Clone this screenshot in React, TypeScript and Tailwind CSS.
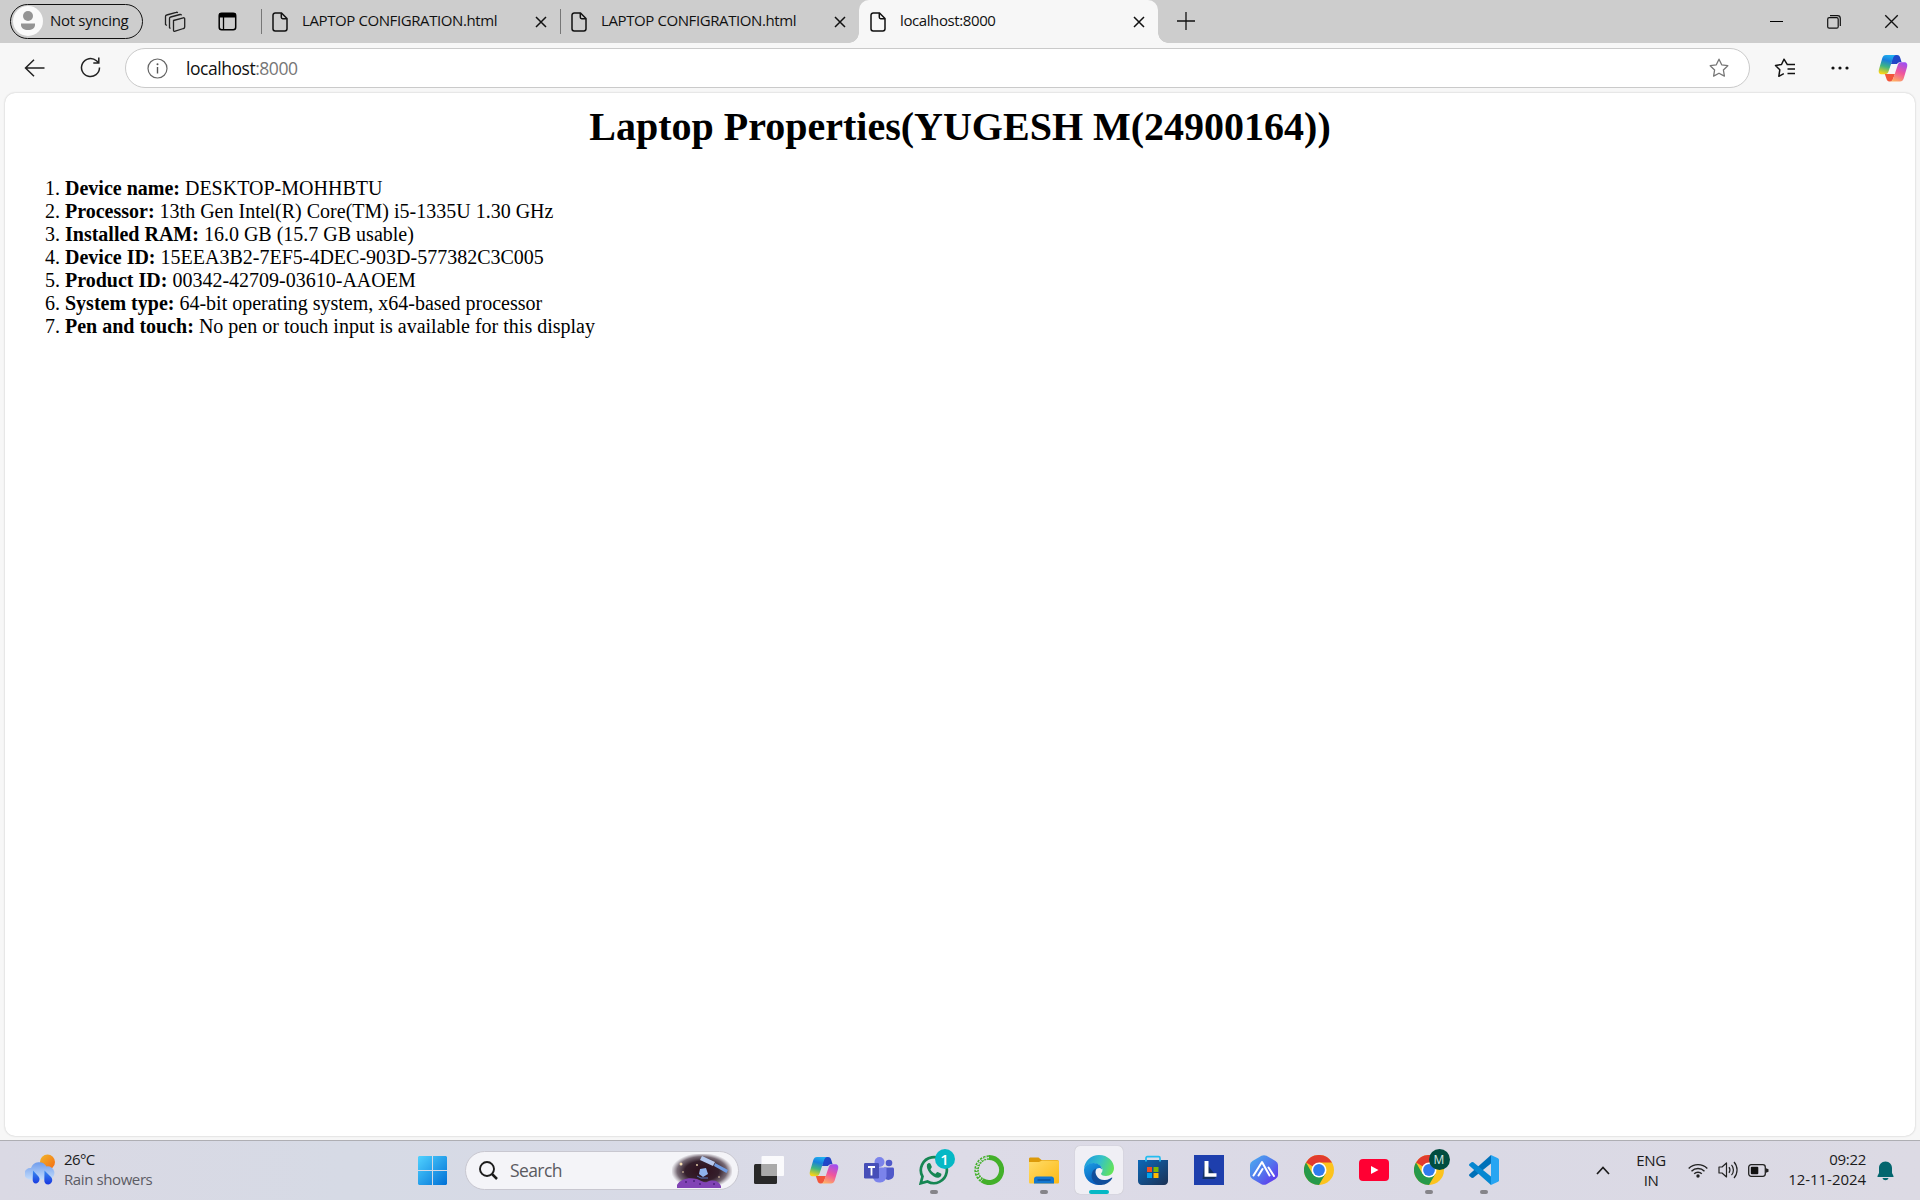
import React from 'react';

type P = { children?: React.ReactNode };

const Svg = ({ w, h, vb, c = '', children }: P & { w: number; h: number; vb?: string; c?: string }) => (
  <svg width={w} height={h} viewBox={vb ?? `0 0 ${w} ${h}`} fill="none" className={'shrink-0 ' + c}>
    {children}
  </svg>
);

const Doc = () => (
  <Svg w={16} h={20}>
    <path d="M3.2 1h6.3L15 6.5v10.3a2.2 2.2 0 0 1-2.2 2.2H3.2A2.2 2.2 0 0 1 1 16.800V3.200A2.200 2.200 0 0 1 3.200 1z" stroke="#111" strokeWidth="1.500" />
    <path d="M9.300 1v4.300c0 .9.500 1.400 1.400 1.400H15" stroke="#111" strokeWidth="1.500" />
  </Svg>
);

const Cross = ({ s }: { s: number }) => (
  <Svg w={s} h={s} vb="0 0 12 12">
    <path d="M1 1l10 10M11 1L1 11" stroke="#111" strokeWidth={s > 12 ? 1.1 : 1.5} />
  </Svg>
);

const Copilot = ({ id }: { id: string }) => (
  <Svg w={30} h={28}>
    <defs>
      <linearGradient id={id + 'a'} x1="0.600" y1="0" x2="0.350" y2="1">
        <stop offset="0" stopColor="#1fb0f0" />
        <stop offset=".3" stopColor="#1a7fdc" />
        <stop offset=".62" stopColor="#3fb583" />
        <stop offset="1" stopColor="#f9d417" />
      </linearGradient>
      <linearGradient id={id + 'b'} x1="0.700" y1="0" x2="0.300" y2="1">
        <stop offset="0" stopColor="#a04ff0" />
        <stop offset=".5" stopColor="#f0569c" />
        <stop offset="1" stopColor="#ffae62" />
      </linearGradient>
      <linearGradient id={id + 'c'} x1="0" y1="0" x2="1" y2="1">
        <stop offset="0" stopColor="#1a4fd0" />
        <stop offset="1" stopColor="#2a3fc0" />
      </linearGradient>
    </defs>
    <path d="M15 1h4c2 0 2.700 1 3.300 3l1.300 4.200c-2.800-.2-3.800.3-4.600 1.800h-6z" fill={`url(#${id}c)`} />
    <path d="M8.200 24l-1.400-4H17l-1.700 4.300c-.6 1.900-1.300 3.200-3.300 3.200h-.5c-2 0-2.700-1.500-3.300-3.500z" fill="#f2563a" />
    <path d="M8 1h10.500c-2 0-2.900 1.300-3.500 3.200l-4.300 12.700c-.7 2.200-1.700 3.300-4.200 3.300H4c-3 0-3.800-2-3-5L4.300 4C5 2 6 1 8 1z" fill={`url(#${id}a)`} />
    <path d="M22 27.500H12c2 0 2.700-1.300 3.300-3.200l4.300-12.800c.7-2.300 1.600-3.300 4-3.300H26c3 0 3.800 2 3 5l-3.300 11.300c-.7 2-1.700 3-3.700 3z" fill={`url(#${id}b)`} />
  </Svg>
);

const Chrome = () => (
  <Svg w={30} h={30}>
    <circle cx="15" cy="15" r="15" fill="#fcc31e" />
    <path d="M15 15L2 7.500A15 15 0 0 1 28 7.500H15z" fill="#e23b2e" />
    <path d="M2 7.500A15 15 0 0 0 15 30l6.500-11.300L15 15l-6.500 3.700z" fill="#26994a" />
    <circle cx="15" cy="15" r="7.500" fill="#fff" />
    <circle cx="15" cy="15" r="5.900" fill="#2f7bee" />
  </Svg>
);

const Star = ({ color }: { color: string }) => (
  <Svg w={20} h={20}>
    <path d="M10 1.200l2.700 5.600 6.100.9-4.400 4.300 1 6.100-5.400-2.900-5.400 2.900 1-6.100L1.200 7.700l6.100-.9z" stroke={color} strokeWidth="1.300" strokeLinejoin="round" />
  </Svg>
);

const Tab = ({ title, active }: { title: string; active?: boolean }) => (
  <div className={'relative flex h-[43px] w-[299px] shrink-0 items-center pl-[11px] ' + (active ? 'rounded-t-[10px] bg-[#f7f7f7]' : '')}>
    {active ? (
      <>
        <span className="absolute bottom-0 -left-[10px] size-[10px] bg-[radial-gradient(circle_at_0_0,#cdcdcd_9.500px,#f7f7f7_10px)]" />
        <span className="absolute bottom-0 -right-[10px] size-[10px] bg-[radial-gradient(circle_at_100%_0,#cdcdcd_9.500px,#f7f7f7_10px)]" />
      </>
    ) : (
      <span className="absolute top-[9px] left-0 h-[25px] w-px bg-[#777]" />
    )}
    <Doc />
    <span className="-mt-[3px] ml-[14px] w-[233px] text-[15px] leading-5 tracking-[-0.400px] whitespace-nowrap">{title}</span>
    <Cross s={12} />
  </div>
);

const TaskbarButton = ({ children, run, active }: P & { run?: boolean; active?: boolean }) => (
  <div className="relative flex h-full w-[55px] shrink-0 items-center justify-center">
    <div className={'-mt-px flex size-12 items-center justify-center rounded-[5px] ' + (active ? 'bg-[#f0eff5] shadow-[0_0_1px_#aaa]' : '')}>{children}</div>
    {run && <span className="absolute bottom-[6px] left-[24px] h-[4px] w-[8px] rounded-full bg-[#858489]" />}
    {active && <span className="absolute bottom-[6px] left-[18px] h-[4px] w-[20px] rounded-full bg-[#05b8c5]" />}
  </div>
);

const specs = [
  ['Device name:', 'DESKTOP-MOHHBTU'],
  ['Processor:', '13th Gen Intel(R) Core(TM) i5-1335U 1.30 GHz'],
  ['Installed RAM:', '16.0 GB (15.7 GB usable)'],
  ['Device ID:', '15EEA3B2-7EF5-4DEC-903D-577382C3C005'],
  ['Product ID:', '00342-42709-03610-AAOEM'],
  ['System type:', '64-bit operating system, x64-based processor'],
  ['Pen and touch:', 'No pen or touch input is available for this display'],
];

const TitleBar = () => (
  <header className="flex h-[43px] items-center bg-[#cdcdcd] text-[15px]">
    <div className="-mt-px ml-[10px] flex h-[35px] w-[133px] shrink-0 items-center rounded-full border-[1.500px] border-[#111] pl-[2px]">
      <Svg w={30} h={30}>
        <circle cx="15" cy="15" r="15" fill="#fafafa" />
        <circle cx="15" cy="10" r="5" fill="#949494" />
        <path d="M8 17.500h14v1.500c0 3-3 5-7 5s-7-2-7-5z" fill="#949494" />
      </Svg>
      <span className="-mt-px ml-[7px] whitespace-nowrap tracking-[-0.300px]">Not syncing</span>
    </div>
    <Svg w={22} h={22} c="ml-[21px]">
      <g stroke="#222" strokeWidth="1.300" strokeLinejoin="round">
        <path d="M9.500 9.500l9.800-2.700c.8-.2 1.400.2 1.400 1v8.200c0 .8-.4 1.300-1.200 1.500l-8.300 2.700c-1 .3-1.700-.1-1.700-1z" />
        <path d="M6.500 17.500l-1-.8V7.500c0-.8.400-1.300 1.200-1.500L16 3.500c.7-.2 1.300.1 1.500.9" />
        <path d="M2.800 14.500l-1.300-1V5.500c0-.8.400-1.300 1.200-1.500l9.500-2.700c.6-.2 1.200 0 1.500.7" />
      </g>
    </Svg>
    <Svg w={19} h={19} c="ml-[32px]">
      <rect x="1.200" y="1.200" width="16.500" height="16.500" rx="2.500" stroke="#000" strokeWidth="1.500" />
      <path d="M1 5.500V3a2 2 0 0 1 2-2h13a2 2 0 0 1 2 2v2.500z" fill="#000" />
      <path d="M5.500 5v13" stroke="#000" strokeWidth="1.300" />
    </Svg>
    <div className="ml-[24px] flex">
      <Tab title="LAPTOP CONFIGRATION.html" />
      <Tab title="LAPTOP CONFIGRATION.html" />
      <Tab title="localhost:8000" active />
    </div>
    <Svg w={18} h={18} c="-mt-px ml-[19px]">
      <path d="M9 0v18M0 9h18" stroke="#111" strokeWidth="1.300" />
    </Svg>
    <div className="ml-auto flex items-center pr-[21px]">
      <span className="h-px w-[13px] bg-black" />
      <Svg w={14} h={14} c="ml-[44px]">
        <rect x=".7" y="2.700" width="10.500" height="10.500" rx="1.500" stroke="#111" strokeWidth="1.200" />
        <path d="M3 .7h7.500a2.800 2.800 0 0 1 2.800 2.800V11" stroke="#111" strokeWidth="1.200" />
      </Svg>
      <span className="ml-[43px]"><Cross s={15} /></span>
    </div>
  </header>
);

const Toolbar = () => (
  <div className="flex h-[50px] items-center bg-[#f7f7f7]">
    <Svg w={21} h={18} c="-mt-px ml-[24px]">
      <path d="M20.500 9H1.500M10 .7L1.500 9l8.500 8.300" stroke="#222" strokeWidth="1.500" />
    </Svg>
    <Svg w={21} h={21} c="-mt-px ml-[35px]">
      <path d="M19.500 10.500a9 9 0 1 1-3-6.700l2 1.900M18.800.5v5.600h-5.500" stroke="#222" strokeWidth="1.500" />
    </Svg>
    <div className="ml-[24px] flex h-[40px] w-[1625px] shrink-0 items-center rounded-full border border-[#cacaca] bg-white">
      <Svg w={21} h={21} c="ml-[21px]">
        <circle cx="10.500" cy="10.500" r="9.500" stroke="#666" strokeWidth="1.200" />
        <path d="M10.500 9v6.500" stroke="#555" strokeWidth="1.400" />
        <circle cx="10.500" cy="6.200" r="1" fill="#555" />
      </Svg>
      <span className="-mt-px ml-[18px] text-[17.500px] leading-6 tracking-[-0.460px]">
        localhost<span className="text-[#767676]">:8000</span>
      </span>
      <span className="mr-[20px] ml-auto"><Star color="#777" /></span>
    </div>
    <Svg w={22} h={20} c="ml-[24px]">
      <path d="M13.200 6.300L10 1.200 7.500 6.500l-6 .9 4.300 4.400-1 6.500 5-2.600M12.700 6.500h8.300M13.500 11h7.500M13.500 15.500h7.500" stroke="#111" strokeWidth="1.500" strokeLinejoin="round" />
    </Svg>
    <Svg w={18} h={4} c="-mt-px ml-[35px]">
      <circle cx="2" cy="2" r="1.600" fill="#111" />
      <circle cx="9" cy="2" r="1.600" fill="#111" />
      <circle cx="16" cy="2" r="1.600" fill="#111" />
    </Svg>
    <span className="ml-[29px]"><Copilot id="t" /></span>
  </div>
);

const SearchArt = () => (
  <Svg w={60} h={34}>
    <defs>
      <radialGradient id="sky">
        <stop offset="0" stopColor="#2e0f1c" />
        <stop offset=".55" stopColor="#35202c" />
        <stop offset=".8" stopColor="#4c3b48" stopOpacity=".75" />
        <stop offset="1" stopColor="#6a5c6a" stopOpacity="0" />
      </radialGradient>
    </defs>
    <ellipse cx="30" cy="17" rx="31" ry="18" fill="url(#sky)" />
    <path d="M5 31c3-6 12-8 20-6 5 2 7 4 10 3 6-3 12-1 14 4v2H5z" fill="#8143b5" />
    <g fill="#4b207b"><circle cx="14" cy="28" r="1" /><circle cx="22" cy="27" r="1" /><circle cx="28" cy="30" r="1" /><circle cx="42" cy="30" r="1" /></g>
    <path d="M30 2l13 6-2 4-13-6z" fill="#b5c9ef" />
    <path d="M43 9l13 7-1.500 3L42 12z" fill="#6f9be2" />
    <path d="M28 15l6-1 2 6-5 3-4-3z" fill="#8fb3ec" />
    <path d="M25 22l4 2h7" stroke="#587bc0" />
    <g fill="#f7dfb4"><circle cx="9" cy="10" r="1.500" /><circle cx="11" cy="18" r=".8" /><circle cx="25" cy="11" r=".9" /><circle cx="47" cy="23" r=".8" /></g>
  </Svg>
);

const Taskbar = () => (
  <footer className="flex h-[60px] items-center border-t border-[#aeaeb3] bg-[linear-gradient(90deg,#dad9e4,#d6dae5_18%,#d8dae6_35%,#dddbe7_50%,#dad9e5_75%,#dcdae4)] text-[15px] text-[#1b1b1b]">
    <div className="flex w-[405px] shrink-0 items-center pl-[25px]">
      <Svg w={31} h={31} c="-mt-[3px]">
        <defs>
          <linearGradient id="sun" x1="0" y1="0" x2="1" y2="1"><stop stopColor="#f0b72c" /><stop offset="1" stopColor="#f56a12" /></linearGradient>
          <linearGradient id="cl" x1="0" y1="0" x2="0" y2="1"><stop stopColor="#6f9cec" /><stop offset="1" stopColor="#c3dcfb" /></linearGradient>
          <linearGradient id="dr" x1="0" y1="0" x2="0" y2="1"><stop stopColor="#3a8cf0" /><stop offset="1" stopColor="#1736e0" /></linearGradient>
        </defs>
        <circle cx="22.500" cy="8" r="7.500" fill="url(#sun)" />
        <path d="M6 14a8.500 8.500 0 0 1 15.500-1.500A6.500 6.500 0 1 1 24 25.500H6A5.800 5.800 0 1 1 6 14z" fill="url(#cl)" />
        <path d="M8 16.500l5.500 6c2.500 3-.2 7-2.500 7s-3.500-2-3.300-4zM19.500 16.500l6.500 6.500c3 3.500 0 7.500-2.700 7.500s-4.200-2-4-4.500z" fill="url(#dr)" />
      </Svg>
      <div className="-mt-[4px] ml-[8px] leading-5">
        <div className="tracking-[-0.600px]">26°C</div>
        <div className="tracking-[-0.400px] text-[#5c5c64]">Rain showers</div>
      </div>
    </div>
    <div className="flex w-[60px] shrink-0 pl-[13px]">
      <Svg w={29} h={29}>
        <defs><linearGradient id="win" gradientUnits="userSpaceOnUse" x1="0" y1="0" x2="29" y2="29"><stop stopColor="#50d2ff" /><stop offset="1" stopColor="#0070d6" /></linearGradient></defs>
        <path d="M1 0h13v14H0V1zM15 0h13l1 1v13H15zM0 15h14v14H1l-1-1zM15 15h14v13l-1 1H15z" fill="url(#win)" />
      </Svg>
    </div>
    <div className="flex h-[39px] w-[274px] shrink-0 items-center rounded-full border border-[#c8c7d0] bg-[#f4f4f8] pl-[13px]">
      <Svg w={19} h={19}>
        <circle cx="8" cy="8" r="7" stroke="#1b1b1b" strokeWidth="1.900" />
        <path d="M13 13l5 5" stroke="#1b1b1b" strokeWidth="2.500" />
      </Svg>
      <span className="ml-[12px] text-[17.500px] tracking-[-0.600px] text-[#5a5a60]">Search</span>
      <span className="mr-[6px] ml-auto"><SearchArt /></span>
    </div>
    <div className="ml-[2px] flex h-full">
      <TaskbarButton>
        <Svg w={30} h={28}>
          <rect y="8" width="23" height="20" rx="1.500" fill="#292929" />
          <rect x="7.500" width="22.500" height="20" rx="1" fill="#fff" fillOpacity=".85" />
          <path d="M7.500 8H23v12H7.500z" fill="#aaa" />
        </Svg>
      </TaskbarButton>
      <TaskbarButton><Copilot id="b" /></TaskbarButton>
      <TaskbarButton>
        <Svg w={30} h={27}>
          <circle cx="15.500" cy="5" r="5" fill="#7b83eb" />
          <circle cx="25" cy="6" r="3.300" fill="#5059c9" />
          <path d="M20 10.500h8.500c.9 0 1.500.6 1.500 1.500v5.500a5.500 5.500 0 0 1-10 3z" fill="#5059c9" />
          <path d="M9 10.500h13.500v9a7 7 0 0 1-13.500 1.500z" fill="#7b83eb" />
          <rect y="6" width="15" height="15.500" rx="1.300" fill="#464eb8" />
          <path d="M4 10h7M7.500 10v8.500" stroke="#fff" strokeWidth="1.800" />
        </Svg>
      </TaskbarButton>
      <TaskbarButton run>
        <span className="relative">
          <Svg w={30} h={30}>
            <path d="M1.700 28.300L3.500 21.500A13 13 0 1 1 8.500 26.500z" stroke="#168653" strokeWidth="2.700" />
            <path d="M8 9.500C9 7.500 11 7.500 11.500 8.700l1.300 3c.3.700-1.500 2.200-1.300 2.700 1 2 2.500 3.300 4.700 4.300.7.300 1.700-1.900 2.400-1.600l3.300 1.500c1.200.6.300 4-2.800 4.200C14 23 6.500 15 8 9.500z" fill="#168653" />
          </Svg>
          <span className="absolute -top-[6px] left-[16px] flex size-5 items-center justify-center rounded-full bg-[#05b8c5] text-[15px] font-semibold text-white">1</span>
        </span>
      </TaskbarButton>
      <TaskbarButton>
        <Svg w={30} h={30}>
          <path d="M15 2.500a12.500 12.500 0 1 1-7 22.800" stroke="#43b02a" strokeWidth="5" />
          <path d="M15 2.500A12.500 12.500 0 0 0 8 25.300" stroke="#43b02a" strokeWidth="4.500" strokeDasharray="2.200 1" />
          <path d="M15 2.500A12.500 12.500 0 0 0 8 25.300" stroke="#dddbe7" strokeWidth="1.500" strokeDasharray="1.800 1.300" />
        </Svg>
      </TaskbarButton>
      <TaskbarButton run>
        <Svg w={30} h={27}>
          <defs><linearGradient id="fo" x1="0" y1="0" x2="1" y2="1"><stop stopColor="#ffdc6a" /><stop offset="1" stopColor="#fdb913" /></linearGradient></defs>
          <path d="M0 2c0-1 .6-1.500 1.500-1.500h8L12.500 3H28c1 0 2 .7 2 2v5H0z" fill="#dc9a0a" />
          <path d="M0 5h10l3-1.500h15.500c1 0 1.500.6 1.500 1.500v20c0 1-.5 1.500-1.500 1.500h-27C.5 26.500 0 26 0 25z" fill="url(#fo)" />
          <path d="M5 26.500V22c0-1.500 1-2.500 2.500-2.500h15c1.500 0 2.500 1 2.500 2.500v4.500z" fill="#1377cf" />
          <path d="M8.500 23h13" stroke="#0a4b92" strokeWidth="1.300" />
        </Svg>
      </TaskbarButton>
      <TaskbarButton active>
        <Svg w={30} h={30}>
          <defs>
            <linearGradient id="e1" x1="0" y1=".3" x2="1" y2=".6"><stop stopColor="#1d9ade" /><stop offset=".5" stopColor="#35c1c8" /><stop offset="1" stopColor="#64e457" /></linearGradient>
            <linearGradient id="e2" x1="0" y1="0" x2=".5" y2="1"><stop stopColor="#1aa0e5" /><stop offset="1" stopColor="#0a5bbb" /></linearGradient>
          </defs>
          <path d="M0 14C.5 6 7 0 15 0c9 0 15 6.500 15 13 0 5-3.700 8-8 8-3.500 0-5-1.200-5-2.200 0-.8 1.500-1.300 1.500-4C18 11 14 8.500 9.500 8.500 4 8.500.5 12 0 14z" fill="url(#e1)" />
          <path d="M0 15c.2-4 4.500-7 9.500-7 4.800 0 8.500 3 8.500 6.500-1-2-5-2.500-6.500 1-2 5 .5 11.500 6.500 14-1 .3-2 .5-3 .5C6.500 30 0 23.500 0 15z" fill="url(#e2)" />
          <path d="M12 13.500c-2 5 1.500 12 9 11.500 3.500-.2 5.500-1.800 6.500-2.300.7-.3 1 .2.600.8C26 27 22 30 17 30 11 30 6 24 8 18c.8-2.500 2.300-3.800 4-4.500z" fill="#114e9b" />
        </Svg>
      </TaskbarButton>
      <TaskbarButton>
        <Svg w={30} h={30} c="-ml-px">
          <defs><linearGradient id="st" x1="0" y1="0" x2="1" y2="1"><stop stopColor="#0c68b8" /><stop offset="1" stopColor="#1b3154" /></linearGradient></defs>
          <path d="M0 5h30v21c0 2-1.500 4-4 4H4c-2.500 0-4-2-4-4z" fill="url(#st)" />
          <path d="M8 6.500V3c0-.8.500-1.300 1.300-1.300h11.400c.8 0 1.300.5 1.300 1.300v3.500" stroke="#24bdf0" strokeWidth="1.700" />
          <path d="M9 12h5v5H9z" fill="#f25022" /><path d="M15.500 12h5v5h-5z" fill="#7fba00" /><path d="M9 18h5v5H9z" fill="#00a4ef" /><path d="M15.500 18h5v5h-5z" fill="#ffb900" />
        </Svg>
      </TaskbarButton>
      <TaskbarButton>
        <Svg w={30} h={30}>
          <path d="M0 0h30v30H0z" fill="#1e3fad" />
          <path d="M10.500 6L8.500 24h12l2-2.500z" fill="#123064" />
          <path d="M10.500 6h4v12.200h8v3.500h-12z" fill="#fff" />
        </Svg>
      </TaskbarButton>
      <TaskbarButton>
        <Svg w={28} h={30}>
          <defs><linearGradient id="ai" x1="0" y1="0" x2="1" y2="1"><stop stopColor="#48b0ef" /><stop offset=".5" stopColor="#5277ed" /><stop offset="1" stopColor="#6527ed" /></linearGradient></defs>
          <path d="M11.500.8q2.500-1.300 5 0L25.500 6Q28 7.500 28 10v10q0 2.500-2.500 4l-9 5.200q-2.500 1.300-5 0L2.500 24Q0 22.500 0 20V10Q0 7.500 2.500 6z" fill="url(#ai)" />
          <path d="M3.500 20.500l8.500-13.500 7.500 13.500M8.500 20.500l4-6.500M18.500 12.500l5.500 8.500" stroke="#fff" strokeWidth="2" strokeLinecap="round" strokeLinejoin="round" />
        </Svg>
      </TaskbarButton>
      <TaskbarButton><Chrome /></TaskbarButton>
      <TaskbarButton>
        <Svg w={30} h={22}>
          <rect width="30" height="22" rx="4" fill="#ff0033" />
          <path d="M12 7l7.500 4-7.500 4z" fill="#fff" />
        </Svg>
      </TaskbarButton>
      <TaskbarButton run>
        <span className="relative">
          <Chrome />
          <span className="absolute -top-[6px] left-[15px] flex size-[21px] items-center justify-center rounded-full bg-[#004d40] text-[12px] text-[#d3e8e5]">M</span>
        </span>
      </TaskbarButton>
      <TaskbarButton run>
        <Svg w={30} h={30}>
          <path d="M22 0v8.500L4 23l-1.500-.2L.4 20.900c-.5-.5-.5-1.200 0-1.700z" fill="#0070b8" />
          <path d="M22 30v-8.500L4 7l-1.500.2L.4 9.100c-.5.500-.5 1.200 0 1.700z" fill="#0687d1" />
          <path d="M22 0l7 3.200c.6.300 1 .9 1 1.600v20.400c0 .7-.4 1.300-1 1.600L22 30z" fill="#27a5f2" />
        </Svg>
      </TaskbarButton>
    </div>
    <div className="ml-auto flex shrink-0 items-center pr-[26px]">
      <Svg w={14} h={9} c="-mt-px">
        <path d="M1 8l6-6.500L13 8" stroke="#1b1b1b" strokeWidth="1.700" />
      </Svg>
      <div className="-mt-[2px] ml-[22px] w-[38px] text-center leading-5 tracking-[-0.400px]">
        <div>ENG</div>
        <div>IN</div>
      </div>
      <Svg w={20} h={16} c="-mt-[2px] ml-[18px]">
        <g stroke="#222" strokeWidth="1.400"><path d="M.7 6.500a13 13 0 0 1 18.600 0M3.500 9.200a9.200 9.200 0 0 1 13 0M6.200 11.800a5.500 5.500 0 0 1 7.600 0" /></g>
        <circle cx="10" cy="14" r="1.700" fill="#222" />
      </Svg>
      <Svg w={21} h={18} c="-mt-px ml-[10px]">
        <path d="M1 6h3l4.500-4v14L4 12H1zM11 6.200a5 5 0 0 1 0 5.600M13.500 3.800a8 8 0 0 1 0 10.400M16 1a12 12 0 0 1 0 16" stroke="#222" strokeWidth="1.200" strokeLinejoin="round" />
      </Svg>
      <Svg w={21} h={13} c="-mt-px ml-[9px]">
        <rect x=".7" y=".7" width="16.600" height="11.600" rx="2.500" stroke="#222" strokeWidth="1.300" />
        <rect x="2.800" y="2.800" width="7.500" height="7.400" rx="1" fill="#111" />
        <path d="M18 4.200l2.500 1v2.600l-2.500 1z" fill="#222" />
      </Svg>
      <div className="-mt-[4px] ml-[8px] w-[89px] text-right leading-5 whitespace-nowrap">
        <div className="tracking-[-0.300px]">09:22</div>
        <div className="tracking-[-0.050px]">12-11-2024</div>
      </div>
      <Svg w={17} h={20} c="ml-[11px]">
        <path d="M8.500.5c4 0 6.500 3 6.500 6.500v5l1.500 3c.2.600 0 1-.6 1H1.100c-.6 0-.8-.4-.6-1L2 12V7C2 3.500 4.500.5 8.500.5zM5.500 17h6c-.5 1.500-1.500 2.200-3 2.200S6 18.500 5.500 17z" fill="#03666e" />
      </Svg>
    </div>
  </footer>
);

export default function App() {
  return (
    <div className="flex h-[1200px] w-[1920px] flex-col overflow-hidden bg-[#f7f7f7] font-['Open_Sans','Noto_Sans',sans-serif] text-[#111]">
      <TitleBar />
      <Toolbar />
      <main className="mx-[5px] h-[1043px] rounded-[10px] bg-white px-[10px] pt-[11px] font-['Liberation_Serif',serif] text-[20px] leading-[23px] text-black shadow-[0_0_2px_#bbb]">
        <h1 className="text-center text-[40px] leading-[46px] font-bold">Laptop Properties(YUGESH M(24900164))</h1>
        <ol className="mt-[27px] list-decimal pl-[50px]">
          {specs.map(([k, v]) => (
            <li key={k}><b>{k}</b> {v}</li>
          ))}
        </ol>
      </main>
      <div className="h-[4px]" />
      <Taskbar />
    </div>
  );
}
